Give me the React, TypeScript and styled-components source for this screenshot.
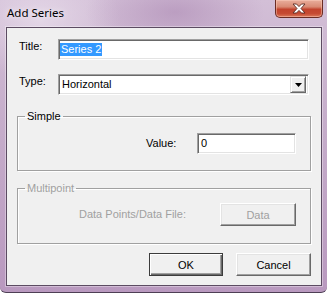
import { FC } from 'react'
import styled, { createGlobalStyle } from 'styled-components'

const GlobalStyle = createGlobalStyle`
  html, body {
    margin: 0;
    padding: 0;
    background: #ffffff;
  }

  body {
    width: 327px;
    height: 294px;
    overflow: hidden;
    font-family: 'Liberation Sans', Arial, sans-serif;
    font-size: 11px;
    color: #000;
  }

  * {
    box-sizing: border-box;
  }
`

const App: FC = () => {
  return (
    <>
      <GlobalStyle />
      <Window>
        <TitleBar>
          <Caption>Add Series</Caption>
          <CloseButton aria-label='Close'>
            <svg width='14' height='11' viewBox='0 0 14 11'>
              <path
                d='M1 1 H4.5 L7 3.6 L9.5 1 H13 L9 5.5 L13 10 H9.5 L7 7.4 L4.5 10 H1 L5 5.5 Z'
                fill='#fff'
                stroke='#5a2a22'
                strokeWidth='0.9'
                strokeLinejoin='round'
              />
            </svg>
          </CloseButton>
        </TitleBar>

        <Client>
          <FieldRow>
            <Label>Title:</Label>
            <Edit>
              <Selected>Series 2</Selected>
            </Edit>
          </FieldRow>

          <FieldRow $top={14}>
            <Label>Type:</Label>
            <Combo>
              <ComboText>Horizontal</ComboText>
              <ComboArrow>
                <svg width='7' height='4' viewBox='0 0 7 4'>
                  <path d='M0 0 H7 L3.5 4 Z' fill='#000' />
                </svg>
              </ComboArrow>
            </Combo>
          </FieldRow>

          <Group $top={15} $padTop={10} $padBottom={16}>
            <Legend>Simple</Legend>
            <GroupRow $gap={12}>
              <Label>Value:</Label>
              <Edit $width={99}>0</Edit>
            </GroupRow>
          </Group>

          <Group $top={11} $padTop={8} $padBottom={17} $disabled>
            <Legend>Multipoint</Legend>
            <GroupRow $gap={34}>
              <Label $disabled>Data Points/Data File:</Label>
              <Button $width={76} disabled>
                Data
              </Button>
            </GroupRow>
          </Group>

          <ButtonRow>
            <Button $width={74} $default>
              OK
            </Button>
            <Button $width={75}>Cancel</Button>
          </ButtonRow>
        </Client>
      </Window>
    </>
  )
}

export default App

const Window = styled.div`
  width: 327px;
  height: 293px;
  display: flex;
  flex-direction: column;
  padding: 0 5px 6px 6px;
  border-bottom: 1px solid #4e3f55;
  border-radius: 0 0 6px 6px;
  background:
    radial-gradient(ellipse 90px 40px at 175px 12px, rgba(160, 120, 168, 0.45), transparent),
    radial-gradient(ellipse 80px 60px at 40px 20px, rgba(235, 225, 238, 0.7), transparent),
    linear-gradient(180deg, #d3bfd7 0%, #c6aecb 40%, #b999bf 100%);
`

const TitleBar = styled.div`
  height: 27px;
  flex: none;
  display: flex;
  justify-content: space-between;
  align-items: flex-start;
`

const Caption = styled.div`
  margin: 5px 0 0 1px;
  font-family: 'Noto Sans', 'Open Sans', sans-serif;
  font-size: 11.5px;
  line-height: 15px;
  color: #000;
  text-shadow: 0 0 6px rgba(255, 255, 255, 0.9);
`

const CloseButton = styled.div`
  width: 48px;
  height: 18px;
  margin-right: -1px;
  display: flex;
  align-items: center;
  justify-content: center;
  border: 1px solid #6b2c24;
  border-top: none;
  border-radius: 0 0 5px 5px;
  background: linear-gradient(180deg, #e9ae9c 0%, #d98a74 40%, #c2432d 55%, #c64b33 80%, #dc7a5c 100%);
  box-shadow: inset 0 0 0 1px rgba(255, 210, 195, 0.45);
`

const Client = styled.div`
  flex: 1;
  display: flex;
  flex-direction: column;
  padding: 11px 10px 0 10px;
  background: #f0f0f0;
  border: 1px solid #5c4b62;
  box-shadow: 0 0 0 1px rgba(255, 255, 255, 0.35);
`

const FieldRow = styled.div<{ $top?: number }>`
  display: flex;
  align-items: center;
  padding: 0 2px;
  margin-top: ${(p) => p.$top ?? 0}px;
`

const Label = styled.span<{ $disabled?: boolean }>`
  width: auto;
  min-width: 39px;
  line-height: 13px;
  color: ${(p) => (p.$disabled ? '#a0a0a0' : '#000')};
  white-space: nowrap;

  ${FieldRow} & {
    width: 39px;
    margin-top: -6px;
  }
`

const Edit = styled.div<{ $width?: number }>`
  ${(p) => (p.$width ? `width: ${p.$width}px;` : 'flex: 1;')}
  height: 21px;
  display: flex;
  align-items: center;
  padding: 0 3px;
  background: #fff;
  border: 1px solid;
  border-color: #a0a0a0 #fff #fff #a0a0a0;
  box-shadow: inset 1px 1px #696969, inset -1px -1px #e3e3e3;
  line-height: 13px;
`

const Selected = styled.span`
  padding: 0 1px;
  margin-left: -2px;
  background: #3399ff;
  color: #fff;
`

const Combo = styled.div`
  flex: 1;
  height: 21px;
  display: flex;
  align-items: center;
  justify-content: space-between;
  padding: 0 2px 0 3px;
  background: #fff;
  border: 1px solid;
  border-color: #a0a0a0 #fff #fff #a0a0a0;
  box-shadow: inset 1px 1px #696969, inset -1px -1px #e3e3e3;
`

const ComboText = styled.span`
  line-height: 13px;
`

const ComboArrow = styled.div`
  width: 16px;
  height: 17px;
  display: flex;
  align-items: center;
  justify-content: center;
  background: #f0f0f0;
  border: 1px solid;
  border-color: #e3e3e3 #696969 #696969 #e3e3e3;
  box-shadow: inset 1px 1px #fff, inset -1px -1px #a0a0a0;
`

const Group = styled.fieldset<{ $top: number; $padTop: number; $padBottom: number; $disabled?: boolean }>`
  margin: ${(p) => p.$top}px 0 0 0;
  min-width: 0;
  padding: ${(p) => p.$padTop}px 14px ${(p) => p.$padBottom}px 0;
  border: 1px solid #a0a0a0;
  box-shadow: inset 1px 1px #fff, 1px 1px #fff;
  color: ${(p) => (p.$disabled ? '#a0a0a0' : '#000')};
`

const Legend = styled.legend`
  margin-left: 7px;
  padding: 0 2px;
  line-height: 13px;
  font-size: 11px;
`

const GroupRow = styled.div<{ $gap: number }>`
  display: flex;
  align-items: center;
  justify-content: flex-end;
  gap: ${(p) => p.$gap}px;
`

const ButtonRow = styled.div`
  display: flex;
  justify-content: flex-end;
  gap: 13px;
  margin-top: 9px;
`

const Button = styled.button<{ $width: number; $default?: boolean }>`
  width: ${(p) => p.$width}px;
  height: 23px;
  padding: 0;
  font-family: 'Liberation Sans', Arial, sans-serif;
  font-size: 11px;
  color: #000;
  background: #f0f0f0;
  border: 1px solid;
  border-color: ${(p) => (p.$default ? '#3c3c3c' : '#fff #696969 #696969 #fff')};
  box-shadow: ${(p) =>
    p.$default
      ? 'inset 1px 1px #fff, inset -1px -1px #696969, inset -2px -2px #a0a0a0'
      : 'inset -1px -1px #a0a0a0, inset 1px 1px #e3e3e3'};

  &:disabled {
    color: #a0a0a0;
  }
`
